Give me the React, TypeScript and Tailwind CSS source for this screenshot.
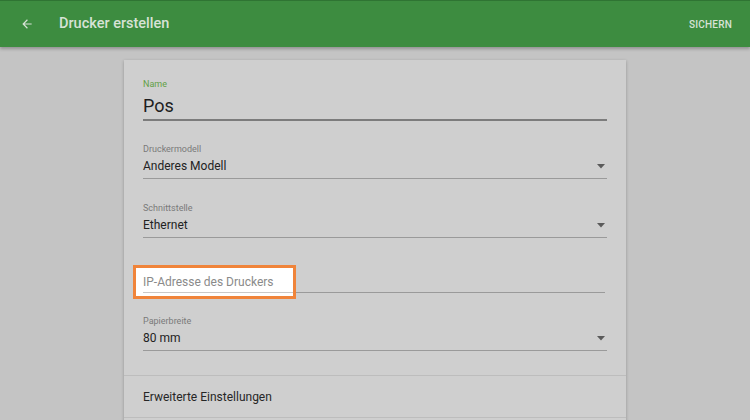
import React from "react";

function Arrow() {
  return (
    <svg width="8" height="5" viewBox="0 0 8 5" className="shrink-0">
      <path d="M0 0 L8 0 L4 4.5 Z" fill="#5a5a5a" />
    </svg>
  );
}

function SelectField({ label, value, mt }: { label: string; value: string; mt: string }) {
  return (
    <div className={mt}>
      <div className="text-[9px] leading-[12px] text-[#7a7a7a]">{label}</div>
      <div className="flex items-center justify-between h-[18px] mt-[2px] pr-[2px]">
        <span className="text-[12px] text-[#222]">{value}</span>
        <Arrow />
      </div>
      <div className="h-px bg-[#9a9a9a] mt-[3px]" />
    </div>
  );
}

export default function App() {
  return (
    <div
      className="w-[750px] h-[420px] overflow-hidden bg-[#c4c4c4] flex flex-col"
      style={{ fontFamily: "Roboto, 'Noto Sans', sans-serif" }}
    >
      <header className="h-[47px] shrink-0 bg-[#3d8c40] border-t border-[#2f7433] flex items-center pl-[20px] pr-[18px] shadow-[0_2px_3px_rgba(0,0,0,0.25)] relative z-10">
        <svg width="14" height="14" viewBox="0 0 24 24" className="shrink-0">
          <path d="M20 11H7.83l5.59-5.59L12 4l-8 8 8 8 1.41-1.41L7.83 13H20v-2z" fill="#d7e2d6" />
        </svg>
        <span className="ml-[25px] text-[14.5px] font-medium text-[#d7e2d6]">Drucker erstellen</span>
        <span className="ml-auto text-[10px] font-medium text-[#d7e2d6] tracking-[0.2px]">SICHERN</span>
      </header>
      <div className="flex justify-center pt-[13px] flex-1">
        <div className="w-[502px] bg-[#cfcfcf] shadow-[0_1px_3px_rgba(0,0,0,0.25)] h-[400px]">
          <div className="px-[19px] pt-[18px]">
            <div>
              <div className="text-[9px] leading-[12px] text-[#62a045]">Name</div>
              <div className="text-[18px] leading-[24px] mt-[4px] text-[#1e1e1e]">Pos</div>
              <div className="h-[2px] bg-[#7c7c7c] mt-[1px]" />
            </div>
            <SelectField label="Druckermodell" value="Anderes Modell" mt="mt-[22px]" />
            <SelectField label="Schnittstelle" value="Ethernet" mt="mt-[23px]" />
            <div className="mt-[35px] relative">
              <div className="text-[12px] leading-[18px] text-transparent">IP-Adresse des Druckers</div>
              <div className="h-px bg-[#9a9a9a] mt-[1px] mr-[2px]" />
              <div className="absolute left-[-10px] top-[-8px] w-[163px] h-[34px] bg-white border-[3px] border-[#f0843a] pl-[7px] pt-[5px]">
                <div className="text-[12px] leading-[18px] text-[#8a8a8a]">IP-Adresse des Druckers</div>
                <div className="h-px bg-[#c9c9c9] mt-[1px]" />
              </div>
            </div>
            <SelectField label="Papierbreite" value="80 mm" mt="mt-[22px]" />
          </div>
          <div className="h-px bg-[#bdbdbd] mt-[24px]" />
          <div className="h-[41px] flex items-center px-[19px] text-[12px] text-[#262626]">
            Erweiterte Einstellungen
          </div>
          <div className="h-px bg-[#bdbdbd]" />
        </div>
      </div>
    </div>
  );
}
